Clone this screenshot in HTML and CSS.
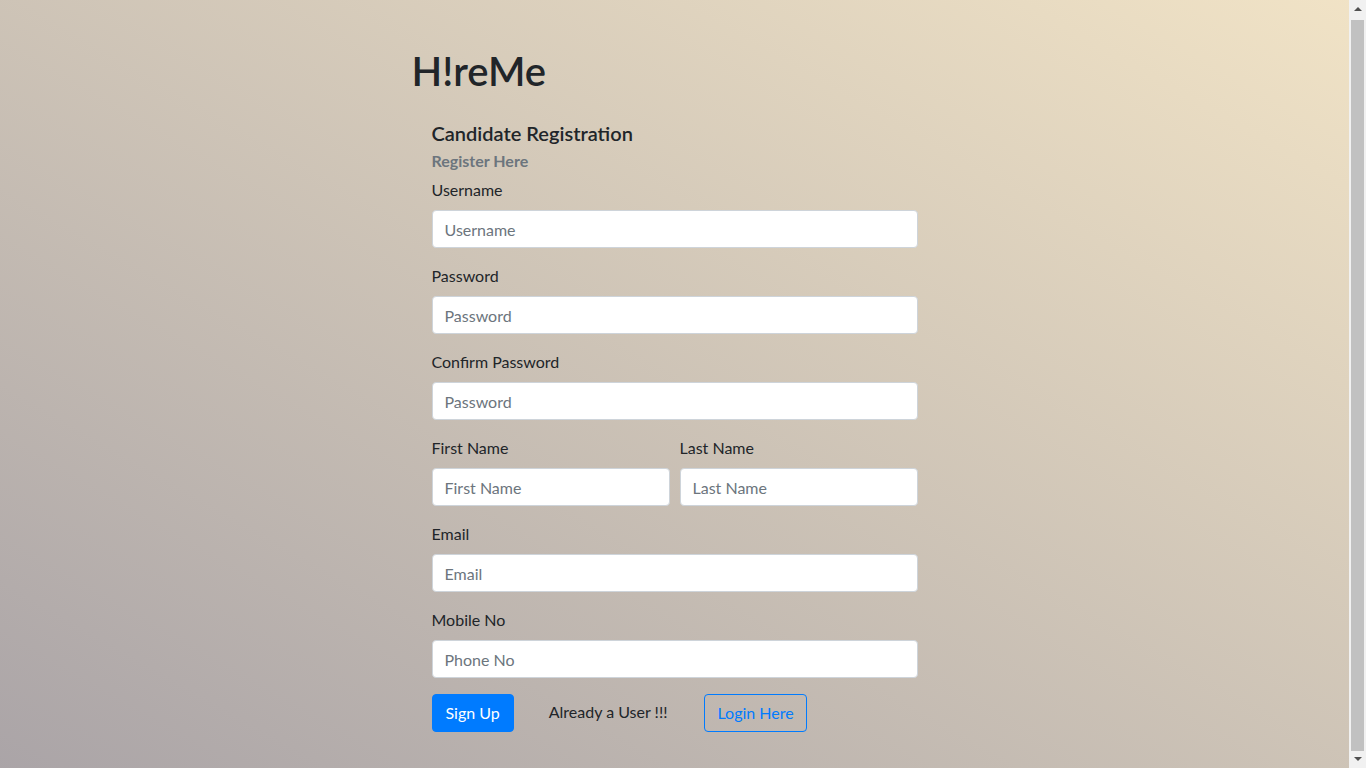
FILE: index.html
```html
<!DOCTYPE html>
<html lang="en">
<head>
<meta charset="utf-8">
<title>H!reMe - Candidate Registration</title>
<link rel="stylesheet" href="styles.css">
</head>
<body>
<main class="page">
  <h1 class="brand">H!reMe</h1>
  <section class="card">
    <h5 class="card-title">Candidate Registration</h5>
    <h6 class="card-subtitle">Register Here</h6>
    <form class="form">
      <div class="form-group">
        <label class="label" for="username">Username</label>
        <input class="input" id="username" type="text" placeholder="Username">
      </div>
      <div class="form-group">
        <label class="label" for="password">Password</label>
        <input class="input" id="password" type="password" placeholder="Password">
      </div>
      <div class="form-group">
        <label class="label" for="confirm">Confirm Password</label>
        <input class="input" id="confirm" type="password" placeholder="Password">
      </div>
      <div class="form-row">
        <div class="form-group col">
          <label class="label" for="first">First Name</label>
          <input class="input" id="first" type="text" placeholder="First Name">
        </div>
        <div class="form-group col">
          <label class="label" for="last">Last Name</label>
          <input class="input" id="last" type="text" placeholder="Last Name">
        </div>
      </div>
      <div class="form-group">
        <label class="label" for="email">Email</label>
        <input class="input" id="email" type="email" placeholder="Email">
      </div>
      <div class="form-group">
        <label class="label" for="mobile">Mobile No</label>
        <input class="input" id="mobile" type="text" placeholder="Phone No">
      </div>
      <div class="actions">
        <button class="btn btn-primary" type="submit">Sign Up</button>
        <span class="already">Already a User !!!</span>
        <a class="btn btn-outline" href="#">Login Here</a>
      </div>
    </form>
  </section>
</main>
<div class="scrollbar" aria-hidden="true">
  <span class="sb-arrow sb-up"></span>
  <span class="sb-thumb"></span>
  <span class="sb-arrow sb-down"></span>
</div>
</body>
</html>
```

FILE: styles.css
```css
html {
  min-height: 100%;
  background: linear-gradient(to top right, #aaa4a7, #f1e3c6);
}

body {
  margin: 0 17px 0 0;
  font-family: Lato, "Open Sans", "Liberation Sans", sans-serif;
  font-size: 16px;
  line-height: 24px;
  color: #212529;
}

.page {
  width: 526px;
  margin: 0 auto;
  padding: 47px 0 24px;
}

.brand {
  margin: 0 0 8px;
  font-size: 40px;
  line-height: 48px;
  font-weight: 600;
  color: #212529;
}

.card {
  padding: 18px 20px 20px;
}

.card-title {
  margin: 0 0 6px;
  font-size: 20px;
  line-height: 24px;
  font-weight: 600;
}

.card-subtitle {
  margin: 0 0 8px;
  font-size: 16px;
  line-height: 19px;
  font-weight: 700;
  color: #6c757d;
}

.form-group {
  display: flex;
  flex-direction: column;
  margin-bottom: 16px;
}

.label {
  margin-bottom: 8px;
  line-height: 24px;
}

.input {
  box-sizing: border-box;
  height: 38px;
  padding: 6px 12px;
  font-family: inherit;
  font-size: 16px;
  line-height: 24px;
  color: #495057;
  background: #fff;
  border: 1px solid #ced4da;
  border-radius: 4px;
  width: 100%;
}

.input::placeholder {
  color: #6c757d;
  opacity: 1;
}

.form-row {
  display: flex;
  gap: 10px;
}

.col {
  flex: 1 1 0;
  min-width: 0;
}

.actions {
  display: flex;
  align-items: center;
  gap: 35px;
}

.btn {
  box-sizing: border-box;
  display: inline-block;
  height: 38px;
  padding: 6px 13px;
  font-family: inherit;
  font-size: 16px;
  line-height: 24px;
  border-radius: 4px;
  border: 1px solid transparent;
  text-decoration: none;
  cursor: pointer;
}

.btn-primary {
  background: #007bff;
  border-color: #007bff;
  color: #fff;
}

.btn-outline {
  margin-left: 2px;
  padding: 6px 12px;
  background: transparent;
  border-color: #007bff;
  color: #007bff;
}

.already {
  margin-top: -2px;
}

/* classic scrollbar drawn over the right edge */
.scrollbar {
  position: fixed;
  top: 0;
  right: 0;
  bottom: 0;
  width: 17px;
  background: #f1f1f1;
  display: flex;
  flex-direction: column;
  align-items: center;
}

.sb-arrow {
  flex: 0 0 auto;
  width: 0;
  height: 0;
  border-left: 4px solid transparent;
  border-right: 4px solid transparent;
}

.sb-up {
  margin: 7px 0 9px;
  border-bottom: 4px solid #505050;
}

.sb-down {
  margin: 6px 0 7px;
  border-top: 4px solid #505050;
}

.sb-thumb {
  flex: 1 1 auto;
  width: 13px;
  background: #c1c1c1;
}
```
